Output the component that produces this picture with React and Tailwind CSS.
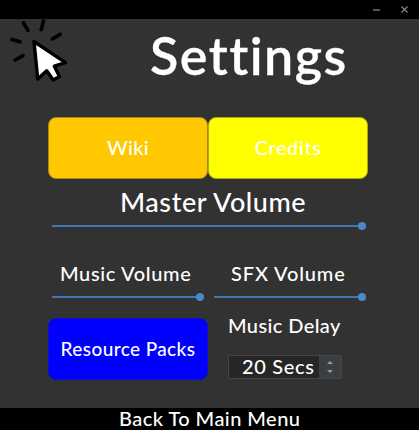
import React from "react";

function Slider({ className }) {
  return (
    <div className={`flex h-2 items-center ${className}`}>
      <div className="h-0.5 flex-1 bg-[#4077b0]" />
      <div className="size-2 rounded-full bg-[#4a88c7]" />
    </div>
  );
}

function ClickCursor() {
  return (
    <svg width="72" height="66" viewBox="0 0 72 66" fill="none" stroke="#000" strokeLinecap="round" strokeLinejoin="round" className="block">
      <path d="M23.5 3.9l4.3 7.4M43.4 2.2l-2.2 8.4M60 15.3l-7.7 4.7M11.9 20.5l8.1 2.3M15.2 41l7.8-4.4" strokeWidth="3.7" />
      <path d="M34 22.5l3.7 37.5 9-8.2 6.5 9.2 6.3-3.6-5.2-10.2 11.2-3.5z" fill="#fff" strokeWidth="3.4" />
    </svg>
  );
}

export default function App() {
  return (
    <div className="flex h-[430px] w-[419px] flex-col overflow-hidden bg-[#323232] font-['Lato','Noto_Sans',sans-serif] font-medium text-white">
      <div className="flex h-[19px] shrink-0 items-center justify-end gap-[21px] bg-black pr-[11px]">
        <div className="h-0.5 w-[7px] bg-[#555]" />
        <svg width="7" height="7" viewBox="0 0 7 7" stroke="#888" strokeWidth="1.1"><path d="M.5.5l6 6M6.5.5l-6 6" /></svg>
      </div>
      <div className="flex h-[98px] shrink-0">
        <div className="w-[150px]"><ClickCursor /></div>
        <h1 className="mt-1 whitespace-nowrap text-[52px] leading-[64px] font-semibold tracking-[1.5px] [-webkit-text-stroke:0.3px_white]">Settings</h1>
      </div>
      <div className="ml-12 flex h-[62px] w-80 shrink-0 text-[20px]">
        <div className="flex flex-1 items-center justify-center rounded-[8px] border border-[#a9871a] bg-[#ffc800] pb-0.5 tracking-[.3px]">Wiki</div>
        <div className="flex flex-1 items-center justify-center rounded-[8px] border border-[#a9a91a] bg-[#ffff00] pb-0.5 tracking-[.6px]">Credits</div>
      </div>
      <div className="mt-[6px] h-[37px] shrink-0 pl-[120px] text-[27px] leading-[33px] tracking-[.55px] whitespace-nowrap">Master Volume</div>
      <Slider className="ml-[52px] w-[314px] shrink-0" />
      <div className="ml-[52px] mt-[30px] flex h-[40px] w-[314px] shrink-0 gap-[10px] text-[20px] leading-[26px] tracking-[.65px]">
        <div className="w-[152px]">
          <div className="pl-2 whitespace-nowrap">Music Volume</div>
          <Slider className="mt-[7px]" />
        </div>
        <div className="w-[152px]">
          <div className="pl-[17px] whitespace-nowrap tracking-[.85px]">SFX Volume</div>
          <Slider className="mt-[7px]" />
        </div>
      </div>
      <div className="ml-12 mt-[18px] flex shrink-0">
        <div className="flex h-[62px] w-40 items-center justify-center whitespace-nowrap rounded-[8px] border border-[#1010c8] bg-[#0000ff] text-[19px] tracking-[.4px]">Resource Packs</div>
        <div className="ml-5 w-[114px]">
          <div className="-mt-[6px] h-[43px] whitespace-nowrap text-[20px] leading-[26px] tracking-[.4px]">Music Delay</div>
          <div className="flex h-[24px] rounded-[2px] border border-[#464646] bg-[#262626]">
            <div className="flex-1 whitespace-nowrap pl-[13px] text-[20px] leading-[21px] tracking-[.65px]">20 Secs</div>
            <div className="flex w-[22px] items-center justify-center bg-[#3c3f41]">
              <svg width="6" height="14" viewBox="0 0 6 14" fill="#9a9a9a"><path d="M0 4l3-3 3 3zM0 10h6l-3 3z" /></svg>
            </div>
          </div>
        </div>
      </div>
      <div className="mt-auto h-[22px] shrink-0 whitespace-nowrap bg-black pl-[119px] text-[20px] leading-[20px] tracking-[.45px]">Back To Main Menu</div>
    </div>
  );
}
